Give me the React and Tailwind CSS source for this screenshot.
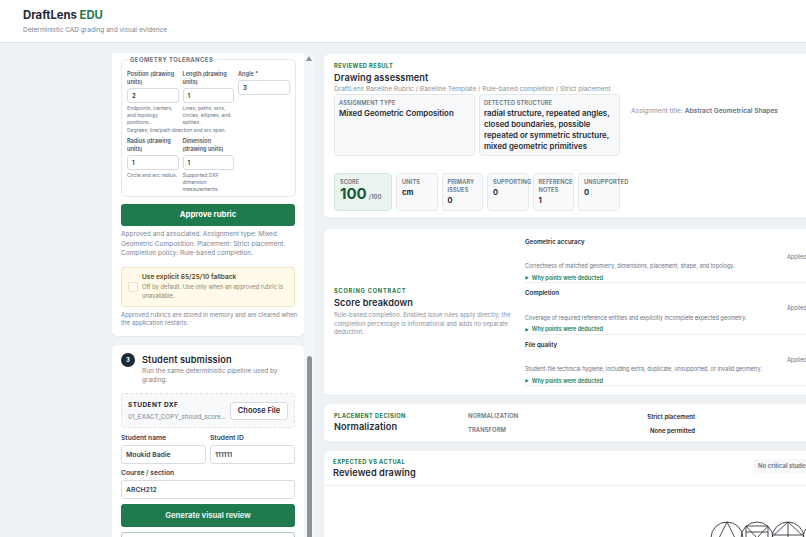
import React from 'react'

const Field = ({ label, value, help, className = '' }) => (
  <div className={className}>
    <label className="block text-[5.6px] leading-[8px] font-semibold text-[#4b5563]">{label}</label>
    <div className="mt-[2px] h-[15px] rounded-[3px] border border-[#d5dbe1] bg-white px-[4px] text-[6px] leading-[13px] font-semibold text-[#1f2933]">{value}</div>
    {help && <p className="mt-[2px] text-[5px] leading-[7px] text-[#6b7280]">{help}</p>}
  </div>
)

const Stat = ({ label, value, className = 'w-[41.5px]' }) => (
  <div className={`${className} h-[38px] shrink-0 rounded-[4px] border border-[#e5e9ed] bg-[#f7f9fa] pl-[5px] pt-[4px]`}>
    <p className="text-[5.7px] leading-[8px] font-semibold tracking-[0.02em] whitespace-pre-line text-[#6b7280]">{label}</p>
    <p className="mt-[2px] text-[7.5px] leading-[10px] font-bold text-[#1f2933]">{value}</p>
  </div>
)

const ScoreRow = ({ title, desc }) => (
  <div className="h-[51.6px] border-b border-[#eceff2] pt-[5px]">
    <p className="text-[6.1px] leading-[9px] font-semibold text-[#1f2933]">{title}</p>
    <p className="mt-[7px] text-right text-[5.6px] leading-[8px] whitespace-nowrap text-[#6b7280]">Applied</p>
    <p className="mt-[1.5px] text-[5.5px] leading-[8px] whitespace-nowrap text-[#6b7280]">{desc}</p>
    <p className="mt-[3.5px] text-[5.5px] leading-[8px] font-semibold text-[#1f7a4d]"><span className="mr-[3px] text-[4px] align-[0.5px]">▶</span>Why points were deducted</p>
  </div>
)

const Eyebrow = ({ children, className = 'tracking-[0.08em]' }) => (
  <p className={`text-[5.65px] leading-[8px] font-bold text-[#1f7a4d] ${className}`}>{children}</p>
)

export default function App() {
  return (
    <div className="flex h-[537px] w-[806px] flex-col overflow-hidden bg-[#eef2f5] font-['Inter',sans-serif]">
      <header className="h-[43px] shrink-0 border-b border-[#e1e6ea] bg-white pl-[23px] pt-[8px]">
        <h1 className="text-[11.3px] leading-[15px] font-bold text-[#1f2933]">DraftLens <span className="text-[#1f7a4d]">EDU</span></h1>
        <p className="mt-[3px] text-[6.5px] leading-[9px] text-[#7b8591]">Deterministic CAD grading and visual evidence</p>
      </header>

      <main className="flex min-h-0 flex-1 pl-[112px]">
        {/* left pane, scrolled */}
        <div className="flex w-[202px] shrink-0 overflow-hidden pt-[10px]">
          <div className="w-[192px] shrink-0">
            <section className="h-[283.5px] rounded-b-[6px] border-b border-[#e3e7eb] bg-white px-[9px] pt-[6px]">
              <fieldset className="relative h-[138px] rounded-[5px] border border-[#e5e9ed] px-[5px] pt-[10px]">
                <span className="absolute top-[-4px] left-[6px] bg-white px-[2px] text-[5.95px] leading-[8px] font-bold tracking-[0.07em] text-[#6b7280]">GEOMETRY TOLERANCES</span>
                <div className="grid grid-cols-[51.5px_51.5px_51.5px] gap-x-[4px]">
                  <Field label={<>Position (drawing<br />units)</>} value="2" help="Endpoints, centers, and topology positions." />
                  <Field label={<>Length (drawing<br />units)</>} value="1" help="Lines, paths, arcs, circles, ellipses, and splines." />
                  <Field label="Angle *" value="3" />
                </div>
                <p className="mt-[1px] text-[5px] leading-[7px] whitespace-nowrap text-[#6b7280]">Degrees; line/path direction and arc span.</p>
                <div className="mt-[3px] grid grid-cols-[51.5px_51.5px] gap-x-[4px]">
                  <Field label={<>Radius (drawing<br />units)</>} value="1" help="Circle and arc radius." />
                  <Field label={<>Dimension<br />(drawing units)</>} value="1" help="Supported DXF dimension measurements." />
                </div>
              </fieldset>
              <button className="mt-[7px] h-[22px] w-full rounded-[3px] bg-[#1f7a4d] text-[7.7px] font-bold text-white">Approve rubric</button>
              <p className="mt-[4px] text-[6.5px] leading-[9.6px] text-[#7b8591]">Approved and associated. Assignment type: Mixed Geometric Composition. Placement: Strict placement. Completion policy: Rule-based completion.</p>
              <div className="mt-[8px] flex h-[40px] items-center rounded-[3px] border border-[#f3e6bd] bg-[#fffaea] pl-[6px]">
                <span className="h-[10px] w-[10px] shrink-0 rounded-[2px] border border-[#e9e3cc] bg-[#fffdf5]" />
                <div className="ml-[4px] w-[150px]">
                  <p className="text-[6.6px] leading-[9px] font-semibold text-[#5f4a12]">Use explicit 65/25/10 fallback</p>
                  <p className="mt-[1px] text-[5.8px] leading-[8.6px] text-[#8a8471]">Off by default. Use only when an approved rubric is unavailable.</p>
                </div>
              </div>
              <p className="mt-[4px] mr-[-4px] text-[6.07px] leading-[8.6px] text-[#7b8591]">Approved rubrics are stored in memory and are cleared when the application restarts.</p>
            </section>

            <section className="mt-[8px] rounded-[6px] bg-white px-[9px] pt-[9px]">
              <div className="flex">
                <span className="mt-[-1px] flex h-[14px] w-[14px] shrink-0 items-center justify-center rounded-full bg-[#1f2933] text-[6px] font-bold text-white">3</span>
                <div className="ml-[7px]">
                  <h2 className="text-[9.2px] leading-[12px] font-semibold tracking-[0.01em] text-[#1f2933]">Student submission</h2>
                  <p className="mt-[1px] text-[6.5px] leading-[9.4px] text-[#7b8591]">Run the same deterministic pipeline used by grading.</p>
                </div>
              </div>
              <div className="mt-[8px] flex h-[35px] items-center justify-between rounded-[4px] border border-dashed border-[#dfe4e8] bg-[#f7f9fa] pr-[6px] pl-[6px]">
                <div>
                  <p className="text-[6.5px] leading-[8px] font-bold tracking-[0.06em] text-[#1f2933]">STUDENT DXF</p>
                  <p className="mt-[4px] w-[100px] truncate text-[6.3px] leading-[8px] text-[#7b8591]">01_EXACT_COPY_should_score_100.dxf</p>
                </div>
                <button className="h-[18px] w-[58px] rounded-[3px] border border-[#d5dbe1] bg-white text-[7.5px] font-semibold text-[#1f2933]">Choose File</button>
              </div>
              <div className="mt-[6px] grid grid-cols-[85px_85px] gap-x-[4px]">
                <div>
                  <label className="block text-[6.7px] leading-[8px] font-semibold text-[#374151]">Student name</label>
                  <div className="mt-[3px] h-[19px] rounded-[3px] border border-[#d5dbe1] pl-[4px] text-[6.8px] leading-[17px] font-semibold text-[#374151]">Moukid Badie</div>
                </div>
                <div>
                  <label className="block text-[6.7px] leading-[8px] font-semibold text-[#374151]">Student ID</label>
                  <div className="mt-[3px] h-[19px] rounded-[3px] border border-[#d5dbe1] pl-[4px] text-[6.8px] leading-[17px] font-semibold text-[#374151]">111111</div>
                </div>
              </div>
              <label className="mt-[5px] block text-[6.7px] leading-[8px] font-semibold text-[#374151]">Course / section</label>
              <div className="mt-[3px] h-[19px] rounded-[3px] border border-[#d5dbe1] pl-[4px] text-[6.8px] leading-[17px] font-semibold text-[#374151]">ARCH212</div>
              <button className="mt-[5px] h-[23px] w-full rounded-[3px] bg-[#1f7a4d] text-[7.7px] font-bold text-[#e4f0e9]">Generate visual review</button>
              <div className="mt-[5px] h-[30px] rounded-[3px] border border-[#a9ccb9] bg-white" />
            </section>
          </div>

          {/* scrollbar */}
          <div className="relative w-[10px] shrink-0 bg-[#f3f5f7]">
            <svg className="absolute top-[3px] left-[2px]" width="6" height="5" viewBox="0 0 6 5"><path d="M3 0 6 5H0Z" fill="#8a8f94" /></svg>
            <div className="absolute top-[303px] bottom-0 left-[3px] w-[5px] rounded-t-[3px] bg-[#8f9296]" />
          </div>
        </div>

        {/* right pane runs past the window edge */}
        <div className="ml-[10px] w-[520px] shrink-0 pt-[11px]">
          <section className="h-[165px] rounded-[6px] border-b border-[#e3e7eb] bg-white pl-[10px] pt-[8px]">
            <Eyebrow>REVIEWED RESULT</Eyebrow>
            <h2 className="mt-[2px] text-[9.2px] leading-[12px] font-semibold tracking-[0.01em] text-[#1f2933]">Drawing assessment</h2>
            <p className="mt-[1px] text-[6.55px] leading-[9px] text-[#8a929b]">DraftLens Baseline Rubric / Baseline Template / Rule-based completion / Strict placement</p>
            <div className="flex items-start">
              <div className="h-[62px] w-[141px] rounded-[4px] border border-[#e5e9ed] bg-[#f7f9fa] pl-[4px] pt-[4px]">
                <p className="text-[5.6px] leading-[8px] font-semibold tracking-[0.03em] text-[#6b7280]">ASSIGNMENT TYPE</p>
                <p className="mt-[1px] text-[7.85px] leading-[11px] font-semibold text-[#1f2933]">Mixed Geometric Composition</p>
              </div>
              <div className="ml-[4px] h-[62px] w-[141px] rounded-[4px] border border-[#e5e9ed] bg-[#f7f9fa] pl-[4px] pt-[4px]">
                <p className="text-[5.6px] leading-[8px] font-semibold tracking-[0.03em] text-[#6b7280]">DETECTED STRUCTURE</p>
                <p className="mt-[1px] text-[7.85px] leading-[11px] font-semibold text-[#1f2933]">radial structure, repeated angles, closed boundaries, possible repeated or symmetric structure, mixed geometric primitives</p>
              </div>
              <p className="mt-[13px] ml-[11px] text-[6.6px] leading-[8px] whitespace-nowrap text-[#8a929b]">Assignment title: <span className="font-semibold text-[#6b7280]">Abstract Geometrical Shapes</span></p>
            </div>
            <div className="mt-[17px] flex gap-[4px]">
              <div className="h-[38px] w-[58px] shrink-0 rounded-[4px] border border-[#d3e6db] bg-[#e9f4ee] pl-[5px] pt-[4px]">
                <p className="text-[5.6px] leading-[8px] font-semibold text-[#6b7280]">SCORE</p>
                <p className="text-[15px] leading-[16px] font-bold whitespace-nowrap text-[#17573a]">100<span className="ml-[2px] text-[6px] font-semibold text-[#6b7280]">/100</span></p>
              </div>
              <Stat label="UNITS" value="cm" />
              <Stat label={'PRIMARY\nISSUES'} value="0" />
              <Stat label="SUPPORTING" value="0" />
              <Stat label={'REFERENCE\nNOTES'} value="1" />
              <Stat label="UNSUPPORTED" value="0" />
            </div>
          </section>

          <section className="mt-[10px] flex h-[167px] items-center rounded-[6px] border-b border-[#e3e7eb] bg-white pl-[10px]">
            <div className="w-[179px] shrink-0">
              <Eyebrow className="tracking-[0.14em]">SCORING CONTRACT</Eyebrow>
              <h2 className="mt-[2px] text-[9.2px] leading-[12px] font-semibold tracking-[0.01em] text-[#1f2933]">Score breakdown</h2>
              <p className="mt-[2px] text-[6px] leading-[8.8px] text-[#8a929b]">Rule-based completion. Enabled issue rules apply directly; the completion percentage is informational and adds no separate deduction.</p>
            </div>
            <div className="mb-[6px] ml-[12px] w-[282px] shrink-0">
              <ScoreRow title="Geometric accuracy" desc="Correctness of matched geometry, dimensions, placement, shape, and topology." />
              <ScoreRow title="Completion" desc="Coverage of required reference entities and explicitly incomplete expected geometry." />
              <ScoreRow title="File quality" desc="Student-file technical hygiene, including extra, duplicate, unsupported, or invalid geometry." />
            </div>
          </section>

          <section className="mt-[8px] flex h-[39px] rounded-[6px] border-b border-[#e3e7eb] bg-white pl-[10px] pt-[8px]">
            <div className="w-[134px] shrink-0">
              <Eyebrow>PLACEMENT DECISION</Eyebrow>
              <h2 className="mt-[1px] text-[9.2px] leading-[12px] font-semibold tracking-[0.01em] text-[#1f2933]">Normalization</h2>
            </div>
            <div className="grid h-[26px] w-[227px] grid-cols-[1fr_auto] content-start gap-y-[5px] leading-[8px]">
              <span className="text-[5.8px] font-semibold tracking-[0.02em] text-[#6b7280]">NORMALIZATION</span>
              <span className="mt-[1px] text-right text-[6px] font-semibold text-[#1f2933]">Strict placement</span>
              <span className="text-[5.8px] font-semibold tracking-[0.02em] text-[#6b7280]">TRANSFORM</span>
              <span className="mt-[1px] text-right text-[6px] font-semibold text-[#1f2933]">None permitted</span>
            </div>
          </section>

          <section className="mt-[8px] h-[140px] rounded-t-[6px] bg-white">
            <div className="flex h-[35px] items-center justify-between border-b border-[#eceff2] pl-[9px]">
              <div>
                <Eyebrow>EXPECTED VS ACTUAL</Eyebrow>
                <h2 className="mt-[1px] text-[9.2px] leading-[12px] font-semibold tracking-[0.01em] text-[#1f2933]">Reviewed drawing</h2>
              </div>
              <span className="mb-[4px] w-[90px] shrink-0 overflow-hidden rounded-[3px] bg-[#f5f7f8] py-[3px] pl-[4px] text-[6px] leading-[8px] font-semibold whitespace-nowrap text-[#6b7280]">No critical student</span>
            </div>
            <svg className="mt-[35px] ml-[386px]" width="100" height="40" viewBox="0 0 100 40" fill="none" stroke="#33383e" strokeWidth="0.9">
              <circle cx="17" cy="17" r="16" />
              <path d="M17 1 4 27M17 1l13 26M4 27h26" />
              <circle cx="47" cy="17" r="16" />
              <path d="M36 5h22M36 5v24M58 5v24M36 5l22 24M58 5 36 29M36 11h22" />
              <circle cx="78" cy="17" r="16" />
              <path d="M62 14h32M78 1v40M78 1 64 14M78 1l14 13" />
              <circle cx="109" cy="17" r="16" />
            </svg>
          </section>
        </div>
      </main>
    </div>
  )
}
